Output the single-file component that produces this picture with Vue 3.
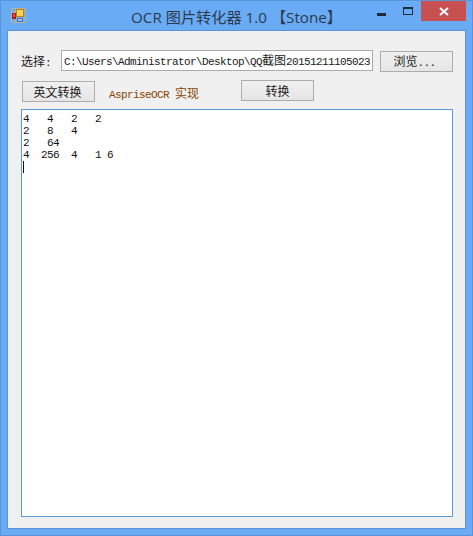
<template>
  <div class="window">
    <!-- 标题栏 -->
    <div class="titlebar">
      <div class="title-left">
        <svg class="app-icon" width="15" height="15" viewBox="0 0 15 15">
          <path d="M0.5 0.5H14.5V14.5H0.5Z M0.5 4.5H4.5 M0.5 10.5H14.5 M4.5 0.5V14.5 M10.5 10.5V14.5" fill="#8fa9c4" fill-opacity="0.15" stroke="#b5b2a0" />
          <rect x="5" y="1" width="8" height="8" fill="#b8860f" />
          <rect x="6" y="2" width="6" height="6" fill="#f7d25a" />
          <rect x="1" y="5" width="4" height="6" fill="#a81c14" />
          <rect x="2" y="6" width="2" height="3" fill="#e8504a" />
          <rect x="6" y="10" width="6" height="4" fill="#4a78c8" />
          <rect x="7" y="11" width="4" height="2" fill="#9dbcec" />
        </svg>
      </div>
      <div class="title">OCR 图片转化器 1.0 【Stone】</div>
      <div class="controls">
        <span class="ctl-min"></span>
        <span class="ctl-max"></span>
        <span class="ctl-close">
          <svg width="10" height="9" viewBox="0 0 10 9">
            <path d="M1 1L9 8M9 1L1 8" stroke="#fff" stroke-width="2" />
          </svg>
        </span>
      </div>
    </div>

    <!-- 内容区 -->
    <div class="client">
      <div class="row-file">
        <label class="choose">选择<span class="mono">:</span></label>
        <div class="path mono">C:\Users\Administrator\Desktop\QQ<span class="cjk">截图</span>20151211105023</div>
        <button class="btn btn-browse">浏览<span class="mono">...</span></button>
      </div>
      <div class="row-actions">
        <button class="btn btn-english">英文转换</button>
        <span class="hint mono">AspriseOCR <span class="cjk">实现</span></span>
        <button class="btn btn-convert">转换</button>
      </div>
      <div class="result"><pre class="result-text">{{ resultText }}</pre><span class="caret"></span></div>
    </div>
  </div>
</template>

<script setup>
const resultText = [
  '4   4   2   2',
  '2   8   4',
  '2   64',
  '4  256  4   1 6',
].join('\n')
</script>

<style>
html,
body {
  margin: 0;
  background: #6aabf5;
}
</style>

<style scoped>
.window {
  box-sizing: border-box;
  width: 473px;
  height: 536px;
  display: flex;
  flex-direction: column;
  background: #6aabf5;
  border: 1px solid #5a93d6;
  font-family: "Liberation Sans", "Noto Sans CJK SC", sans-serif;
}

.titlebar {
  height: 29px;
  flex-shrink: 0;
  display: grid;
  grid-template-columns: 1fr auto 1fr;
  align-items: start;
}

.title-left {
  padding: 7px 0 0 10px;
}

.app-icon {
  display: block;
}

.title {
  padding: 6px 0 0 0;
  font-size: 15.2px;
  line-height: 20px;
  color: #2b3a4b;
  font-family: "Open Sans", "Noto Sans CJK SC", sans-serif;
  white-space: pre;
}

.controls {
  display: flex;
  justify-content: flex-end;
  padding-right: 6px;
}

.ctl-min {
  width: 9px;
  height: 3px;
  margin: 12px 17px 0 0;
  background: #1d2b3a;
}

.ctl-max {
  box-sizing: border-box;
  width: 10px;
  height: 8px;
  margin: 6px 8px 0 0;
  border: 1px solid #1d2b3a;
  border-top-width: 2px;
}

.ctl-close {
  width: 45px;
  height: 20px;
  background: #c75050;
  display: flex;
  align-items: center;
  justify-content: center;
}

.client {
  flex: 1;
  margin: 0 6px 6px;
  padding: 19px 12px 11px 13px;
  min-height: 0;
  display: flex;
  flex-direction: column;
  background: #f0f0f0;
  border: 1px solid #5a93d6;
  font-size: 12px;
  color: #1a1a1a;
}

.mono {
  font-family: "Liberation Mono", monospace;
  font-size: 11px;
  letter-spacing: -0.6px;
}

.cjk {
  font-family: "Noto Sans CJK SC", sans-serif;
  font-size: 12px;
  letter-spacing: 0;
}

.row-file {
  display: flex;
  align-items: flex-start;
  height: 31px;
}

.choose {
  width: 40px;
  line-height: 21px;
  flex-shrink: 0;
  font-family: "Noto Sans CJK SC", sans-serif;
}

.path {
  box-sizing: border-box;
  width: 312px;
  height: 21px;
  padding: 0 1px 0 2px;
  background: #fff;
  border: 1px solid #ababab;
  line-height: 17px;
  white-space: nowrap;
  overflow: hidden;
}

.btn {
  box-sizing: border-box;
  width: 73px;
  height: 21px;
  padding: 0;
  border: 1px solid #acacac;
  background: linear-gradient(#f0f0f0, #e5e5e5);
  font-family: "Noto Sans CJK SC", sans-serif;
  font-size: 12px;
  line-height: 18px;
  color: #1a1a1a;
}

.btn-browse {
  margin: 1px 0 0 7px;
  padding-right: 4px;
}

.btn-english {
  padding-right: 2px;
}

.row-actions {
  display: flex;
  align-items: flex-start;
  height: 28px;
  padding-left: 1px;
}

.hint {
  width: 132px;
  margin: 3px 0 0 14px;
  line-height: 17px;
  color: #8a4400;
}

.btn-convert {
  margin-top: -1px;
}

.result {
  box-sizing: border-box;
  flex: 1;
  min-height: 0;
  padding: 3px 1px 0 1px;
  background: #fff;
  border: 1px solid #5a9bdc;
  overflow: hidden;
}

.result-text {
  margin: 0;
  font-family: "Liberation Mono", monospace;
  font-size: 11px;
  letter-spacing: -0.6px;
  line-height: 12px;
  color: #111;
}

.caret {
  display: block;
  width: 1px;
  height: 12px;
  background: #111;
}
</style>
